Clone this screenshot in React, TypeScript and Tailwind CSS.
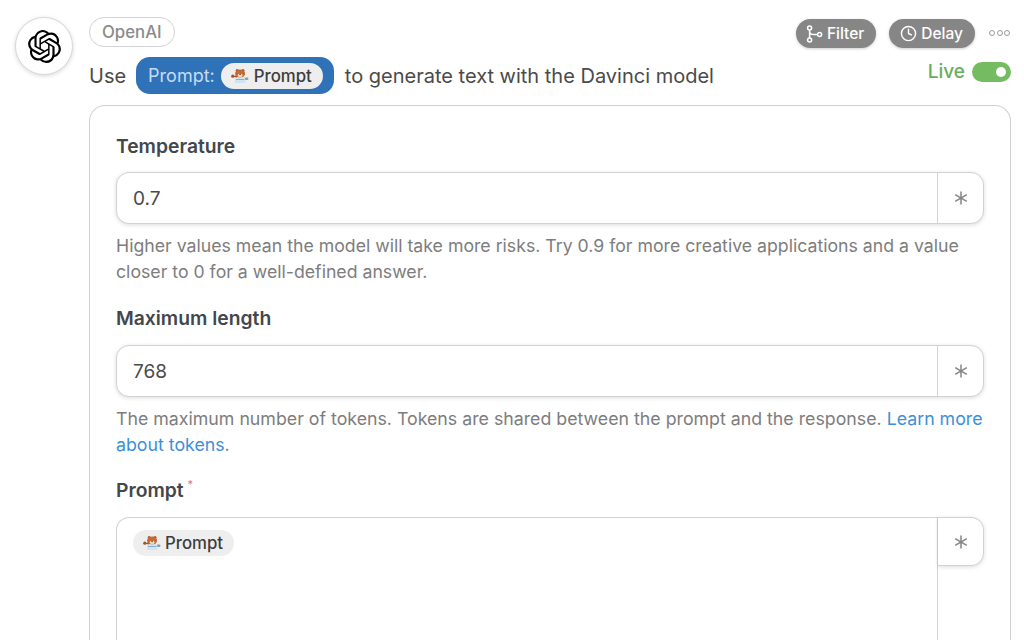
import { SiOpenai } from "react-icons/si";
import { Clock } from "lucide-react";

function Bear() {
  return (
    <svg width="18" height="16" viewBox="0 0 18 16" className="shrink-0">
      <circle cx="1.8" cy="8.2" r="1.6" fill="#a0522d" />
      <path d="M2 8.5 L6 7 L6 10 Z" fill="#a0522d" />
      <circle cx="6.2" cy="2.4" r="1.5" fill="#a8552a" />
      <circle cx="12" cy="2.4" r="1.5" fill="#a8552a" />
      <ellipse cx="9.1" cy="5.6" rx="5" ry="4.2" fill="#c46a32" />
      <ellipse cx="9.1" cy="7.4" rx="2.5" ry="1.8" fill="#f1d7b8" />
      <rect x="8.3" y="5.7" width="1.6" height="1" fill="#3a2415" />
      <rect x="4" y="9.4" width="10.4" height="5.6" fill="#cfe3f2" />
      <rect x="5" y="11" width="8.4" height="1" fill="#7fb0d6" />
      <rect x="14" y="9.5" width="3.4" height="2.4" rx="1" fill="#9a9a9a" />
    </svg>
  );
}

function Star() {
  return (
    <svg width="14" height="14" viewBox="0 0 14 14" stroke="#858585" strokeWidth="1.5" fill="none">
      <path d="M7 0.5V13.5M1.2 3.6L12.8 10.4M12.8 3.6L1.2 10.4" />
    </svg>
  );
}

function FilterIcon() {
  return (
    <svg width="17" height="18" viewBox="0 0 17 18" fill="none" stroke="white" strokeWidth="1.5" className="shrink-0">
      <circle cx="3.6" cy="3" r="2" />
      <circle cx="3.6" cy="15" r="2" />
      <circle cx="13.6" cy="9.6" r="2" />
      <path d="M3.6 5V13M3.6 6.5C3.6 9 6 9.6 8 9.6H11.6" />
    </svg>
  );
}

function Field({ label, value, inputClass, helpClass, children }: { label: string; value: string; inputClass: string; helpClass: string; children: React.ReactNode }) {
  return (
    <div className="flex flex-col">
      <div className="text-[19.3px] leading-[24px] font-semibold text-[#43474d]">{label}</div>
      <div className={`flex h-[52px] rounded-[13px] border border-[#d2d2d2] bg-white shadow-[0_1px_4px_rgba(0,0,0,0.14)] ${inputClass}`}>
        <div className="flex flex-1 items-center px-4 pt-[2px] text-[19px] text-[#4a4a4a]">{value}</div>
        <div className="flex w-[46px] items-center justify-center border-l border-[#d2d2d2]">
          <Star />
        </div>
      </div>
      <div className={`mt-[9px] leading-[26px] text-[#7d7d7d] ${helpClass}`}>{children}</div>
    </div>
  );
}

export default function App() {
  return (
    <div className="flex h-[640px] w-[1024px] overflow-hidden bg-white pl-[15px] pr-[13px] pt-[17px] font-['Inter',sans-serif]">
      <div className="flex h-[58px] w-[58px] shrink-0 items-center justify-center rounded-full border border-[#d8d8d8] bg-white shadow-[0_1px_4px_rgba(0,0,0,0.16)]">
        <SiOpenai className="h-[33px] w-[33px] text-black" />
      </div>
      <div className="ml-4 flex min-w-0 flex-1 flex-col">
        <div className="flex h-[88px] shrink-0 justify-between">
          <div className="flex flex-col items-start">
            <div className="flex h-[30px] items-center rounded-full border border-[#d4d4d4] px-3 pt-px text-[16.8px] font-medium text-[#8b8b8b]">
              OpenAI
            </div>
            <div className="mt-[10px] flex items-center text-[20px] text-[#4a4a4a]">
              <span className="pt-px">Use</span>
              <div className="ml-[10px] flex h-[37px] items-center rounded-[14px] bg-[#2f72b8] pl-3 pr-[11px]">
                <span className="text-[18px] text-[#c5dcf3]">Prompt:</span>
                <div className="ml-[6px] flex h-[26px] items-center gap-[5px] rounded-full bg-[#eeeeee] pl-[10px] pr-[11px] text-[16.8px] font-medium text-[#3d3d3d]">
                  <Bear />
                  <span className="pt-[2px]">Prompt</span>
                </div>
              </div>
              <span className="ml-[11px] pt-px">to generate text with the Davinci model</span>
            </div>
          </div>
          <div className="flex flex-col items-end pt-px">
            <div className="flex h-[30px] items-center">
              <div className="flex h-[29px] items-center gap-1 rounded-full bg-[#868686] pl-[10px] pr-3 pt-px text-[15.5px] font-medium text-white shadow-[0_1px_3px_rgba(0,0,0,0.2)]">
                <FilterIcon />
                Filter
              </div>
              <div className="ml-[13px] flex h-[29px] items-center gap-1 rounded-full bg-[#868686] pl-[11px] pr-3 pt-px text-[15.5px] font-medium text-white shadow-[0_1px_3px_rgba(0,0,0,0.2)]">
                <Clock className="h-[17px] w-[17px]" strokeWidth={2} />
                Delay
              </div>
              <div className="ml-[14px] mr-px flex gap-[1.5px]">
                <span className="h-[6px] w-[6px] rounded-full border-[1.5px] border-[#9a9a9a]" />
                <span className="h-[6px] w-[6px] rounded-full border-[1.5px] border-[#9a9a9a]" />
                <span className="h-[6px] w-[6px] rounded-full border-[1.5px] border-[#9a9a9a]" />
              </div>
            </div>
            <div className="mt-[9px] flex items-center gap-[7px]">
              <span className="pt-px text-[19px] font-medium text-[#69ad5b]">Live</span>
              <div className="flex h-[20px] w-[39px] items-center justify-end rounded-full bg-[#75bb62] pr-[5px]">
                <span className="h-[10px] w-[10px] rounded-full bg-white" />
              </div>
            </div>
          </div>
        </div>
        <div className="flex flex-1 flex-col gap-[21px] rounded-t-[16px] border border-b-0 border-[#cfcfcf] px-[26px] pt-[28px]">
          <Field label="Temperature" value="0.7" inputClass="mt-[14px]" helpClass="text-[17.7px]">
            Higher values mean the model will take more risks. Try 0.9 for more creative applications and a value closer to 0 for a well-defined answer.
          </Field>
          <Field label="Maximum length" value="768" inputClass="mt-[15px]" helpClass="text-[17.75px]">
            The maximum number of tokens. Tokens are shared between the prompt and the response.{" "}
            <span className="text-[#3d8fdb]">Learn more about tokens</span>.
          </Field>
          <div className="-mt-px flex flex-1 flex-col">
            <div className="text-[19.3px] leading-[24px] font-semibold text-[#43474d]">
              Prompt<span className="relative -top-[9px] ml-1 text-[11px] font-normal text-[#e5756f]">*</span>
            </div>
            <div className="mt-[12px] flex flex-1 items-start">
              <div className="flex-1 self-stretch rounded-tl-[13px] border-l border-t border-r border-[#d2d2d2] pl-4 pt-3">
                <div className="inline-flex h-[26px] items-center gap-1 rounded-full bg-[#eeeeee] pl-[10px] pr-[11px] text-[16.8px] font-medium text-[#3d3d3d]">
                  <Bear />
                  <span className="pt-[2px]">Prompt</span>
                </div>
              </div>
              <div className="flex h-[49px] w-[46px] items-center justify-center rounded-r-[13px] border-y border-r border-[#d2d2d2] shadow-[0_1px_4px_rgba(0,0,0,0.14)]">
                <Star />
              </div>
            </div>
          </div>
        </div>
      </div>
    </div>
  );
}
